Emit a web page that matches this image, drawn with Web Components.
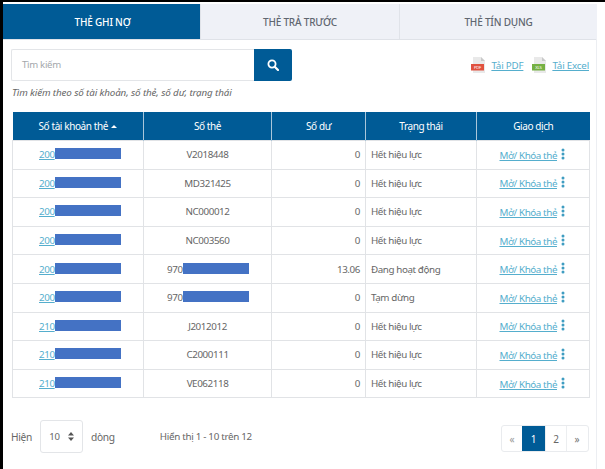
<!DOCTYPE html>
<html lang="vi"><head><meta charset="utf-8"><style>
html,body{margin:0;padding:0;background:#fff}
body{font-family:"Noto Sans","Open Sans",sans-serif;color:#666;width:605px;height:469px;overflow:hidden}
</style></head><body>
<card-app></card-app>
<script>
const LINK='#55aecd', BLUE='#005b96', RED='#4472c4', LINE='#e1e3e6';
const FONT=`font-family:"Noto Sans","Open Sans",sans-serif;`;
class TabBar extends HTMLElement{constructor(){super();this.attachShadow({mode:'open'}).innerHTML=`<style>
:host{display:grid;grid-template-columns:197px 199px 198px;height:35px;border-bottom:1px solid #dfe2e8;box-sizing:content-box;${FONT}}
div{display:flex;align-items:center;justify-content:center;background:#eff1f7;color:#5f6670;font-size:10px;font-weight:500;letter-spacing:-.2px;border-left:1px solid #e0e3e9}
.on{background:${BLUE};color:#fff;border:0;padding-left:2px}
</style><div class="on">THẺ GHI NỢ</div><div>THẺ TRẢ TRƯỚC</div><div>THẺ TÍN DỤNG</div>`}}
customElements.define('tab-bar',TabBar);
class SearchRow extends HTMLElement{constructor(){super();this.attachShadow({mode:'open'}).innerHTML=`<style>
:host{display:flex;justify-content:space-between;align-items:center;${FONT}}
.box{display:flex;width:281px;height:32px}
.inp{flex:1;border:1px solid #e3e5e8;border-right:0;border-radius:2px 0 0 2px;display:flex;align-items:center;padding-left:10px;padding-bottom:2px;box-sizing:border-box;font-size:9.6px;color:#a3a7ab;letter-spacing:-.3px}
.btn{width:38px;background:${BLUE};display:flex;align-items:center;justify-content:center;border-radius:0 2px 2px 0}
.dl{display:flex;align-items:center;font-size:9.8px;letter-spacing:-.2px}
a{color:${LINK};text-decoration:underline}
svg.f{display:block;margin-right:5px}
a.x{margin-right:9px}
</style><div class="box"><div class="inp">Tìm kiếm</div><div class="btn"><svg width="12" height="12" viewBox="0 0 12 12"><circle cx="5" cy="5" r="3.6" fill="none" stroke="#fff" stroke-width="1.8"/><path d="M7.7 7.7L11 11" stroke="#fff" stroke-width="2.2" stroke-linecap="round"/></svg></div></div>
<div class="dl">
<svg class="f" width="15" height="18" viewBox="0 0 15 18"><path d="M2 1h8l4 4v12H2z" fill="#e9e9e9"/><path d="M10 1l4 4h-4z" fill="#c9c9c9"/><rect y="8" width="13" height="6.5" fill="#e0513f"/><text x="6.5" y="13" font-size="4.2" text-anchor="middle" fill="#fff" font-family="Noto Sans">PDF</text></svg><a class="x">Tải PDF</a>
<svg class="f" width="15" height="18" viewBox="0 0 15 18"><path d="M2 1h8l4 4v12H2z" fill="#e9e9e9"/><path d="M10 1l4 4h-4z" fill="#c9c9c9"/><rect y="8" width="13" height="6.5" fill="#75b043"/><text x="6.5" y="13" font-size="4.2" text-anchor="middle" fill="#fff" font-family="Noto Sans">XLS</text></svg><a>Tải Excel</a></div>`}}
customElements.define('search-row',SearchRow);
class CardTable extends HTMLElement{constructor(){super();
const rows=[['200',1,'','V2018448','0','Hết hiệu lực'],['200',1,'','MD321425','0','Hết hiệu lực'],['200',1,'','NC000012','0','Hết hiệu lực'],['200',1,'','NC003560','0','Hết hiệu lực'],['200',1,'970','','13.06','Đang hoạt động'],['200',1,'970','','0','Tạm dừng'],['210',1,'','J2012012','0','Hết hiệu lực'],['210',1,'','C2000111','0','Hết hiệu lực'],['210',1,'','VE062118','0','Hết hiệu lực']];
const tr=rows.map(r=>`<tr><td class="acc"><a>${r[0]}</a><i></i></td>${r[2]?`<td class="acc2">${r[2]}<i></i></td>`:`<td class="c">${r[3]}</td>`}<td class="r">${r[4]}</td><td>${r[5]}</td><td class="c act"><a>Mở/ Khóa thẻ</a><svg width="4" height="12" viewBox="0 0 4 12"><circle cx="2" cy="2" r="1.5"/><circle cx="2" cy="6" r="1.5"/><circle cx="2" cy="10" r="1.5"/></svg></td></tr>`).join('');
this.attachShadow({mode:'open'}).innerHTML=`<style>
:host{display:block;${FONT}}
table{border-collapse:collapse;table-layout:fixed;width:577px;height:286px;font-size:9.8px;letter-spacing:-.4px;color:#666}
th{background:${BLUE};color:#fff;font-weight:400;height:28px;border-left:1px solid #a9c6da;padding:0;font-size:10px}
th:first-child{border-left:0}
td{border:1px solid ${LINE};padding:0 5px;height:28.6px;box-sizing:border-box;white-space:nowrap}
td.act{padding-right:7px}
.c{text-align:center}.r{text-align:right}
a{color:${LINK};text-decoration:underline}
.acc{padding-left:26px}.acc2{padding-left:23px}
i{display:inline-block;width:66px;height:11px;background:${RED};vertical-align:-1px}
.act svg{margin-left:3.5px;fill:#3f9dc1;vertical-align:-1px}
.car{display:inline-block;border:3.5px solid transparent;border-bottom:3.5px solid #fff;border-top:0;margin-left:3px;vertical-align:2px}
</style><table><colgroup><col style="width:131px"><col style="width:128px"><col style="width:94px"><col style="width:111px"><col style="width:113px"></colgroup>
<thead><tr><th>Số tài khoản thẻ<span class="car"></span></th><th>Số thẻ</th><th>Số dư</th><th>Trạng thái</th><th>Giao dịch</th></tr></thead><tbody>${tr}</tbody></table>`}}
customElements.define('card-table',CardTable);
class PagerBar extends HTMLElement{constructor(){super();this.attachShadow({mode:'open'}).innerHTML=`<style>
:host{display:flex;align-items:center;font-size:10.2px;color:#666;letter-spacing:-.3px;${FONT}}
.sel{width:43px;height:33px;box-sizing:border-box;border:1px solid #e3e5e8;border-radius:3px;margin:0 8px 0 8px;display:flex;align-items:center;justify-content:center;gap:8px;font-size:9.6px}
.info{margin-left:45px;font-size:9.8px;letter-spacing:-.3px}
.pg{margin-left:auto;margin-top:4px;display:flex;height:27px;border:1px solid #e9ebee;border-radius:3px;box-sizing:border-box;width:88px}
.pg span{display:flex;align-items:center;justify-content:center;flex:0 0 21px;box-sizing:border-box;border-left:1px solid #eceef0;font-size:10px}
.pg span:first-child{border:0;flex-basis:20px;color:#999}
.pg .on{background:${BLUE};color:#fff;flex-basis:23px;border:0}
svg{display:block}
</style><span>Hiện</span><div class="sel">10<svg width="6" height="9" viewBox="0 0 6 9"><path d="M3 0l3 3.4H0zM3 9L0 5.6h6z" fill="#555"/></svg></div><span>dòng</span><span class="info">Hiển thị 1 - 10 trên 12</span>
<div class="pg"><span>«</span><span class="on">1</span><span>2</span><span style="color:#777">»</span></div>`}}
customElements.define('pager-bar',PagerBar);
class CardApp extends HTMLElement{constructor(){super();this.attachShadow({mode:'open'}).innerHTML=`<style>
:host{display:block;width:605px;height:469px;box-sizing:border-box;border-top:2px solid #000;border-left:3px solid #000;padding-top:2px}
.panel{width:594px;height:465px;box-sizing:border-box;border-right:1px solid #eceef2}
.body{padding:0 7px 0 8px;display:flex;flex-direction:column}
.hint{font-size:9.8px;font-style:italic;color:#666;margin-top:5px;height:14px;line-height:14px;letter-spacing:-.12px;padding-left:1px}
search-row{margin-top:9px}
card-table{margin-top:12px;margin-left:1px}
pager-bar{margin-top:22px;height:33px}
</style><div class="panel"><tab-bar></tab-bar><div class="body"><search-row></search-row><div class="hint">Tìm kiếm theo số tài khoản, số thẻ, số dư, trạng thái</div><card-table></card-table><pager-bar></pager-bar></div></div>`}}
customElements.define('card-app',CardApp);
</script></body></html>
